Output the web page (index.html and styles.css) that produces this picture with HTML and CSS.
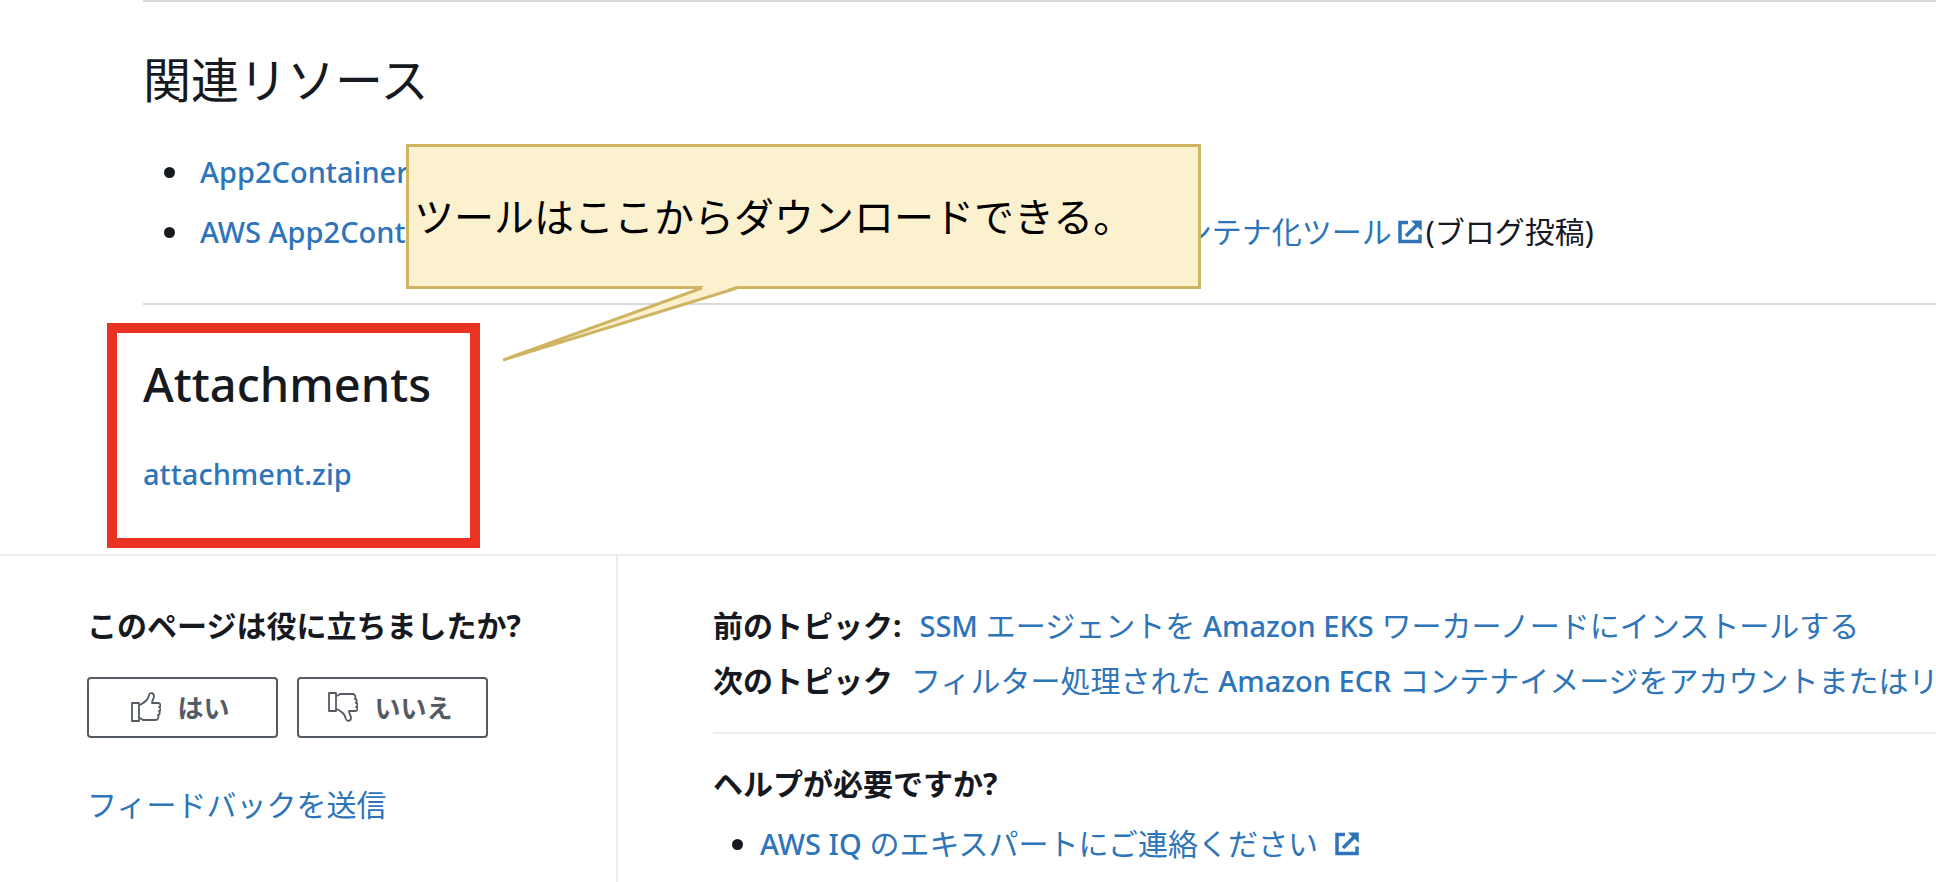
FILE: index.html
```html
<!DOCTYPE html>
<html lang="ja">
<head>
<meta charset="utf-8">
<meta name="viewport" content="width=device-width, initial-scale=1">
<title>関連リソース</title>
<link rel="stylesheet" href="styles.css">
</head>
<body>
<svg class="sprite" aria-hidden="true">
  <symbol id="external" viewBox="0 0 24 24">
    <path d="M10 2.500H2v19h20v-7" fill="none" stroke="currentColor" stroke-width="3.500"/>
    <path d="M8 16L20 4" fill="none" stroke="currentColor" stroke-width="3.500"/>
    <path d="M13 .5h10.750V11z" fill="currentColor"/>
  </symbol>
  <symbol id="thumb" viewBox="0 0 30 30">
    <path d="M1 11h7v18H1zM9 13c5-3 8-5 9-10 1-3 5-2 5 1 0 3-2 4-2 7h6c3 0 3 4 1 4 2 1 2 4 0 4 1 2 1 4-1 4 1 2 0 5-2 5H12l-3-2" fill="none" stroke="currentColor" stroke-width="1.800" stroke-linejoin="round"/>
  </symbol>
</svg>
<main class="content">
  <section class="resources">
    <h2 class="title">関連リソース</h2>
    <ul class="list resource-list">
      <li><a class="en" href="#">App2Container</a></li>
      <li><a href="#"><span class="en">AWS App2Container</span> – Java および ASP.NET アプリケーションの新しいコンテナ化ツール<svg class="ext ext-tight"><use href="#external"/></svg></a>(ブログ投稿)</li>
    </ul>
    <aside class="callout">
      <p class="callout-text">ツールはここからダウンロードできる。</p>
      <svg class="callout-tail" viewBox="0 0 240 80" aria-hidden="true">
        <path d="M202 1L0 75L234 1z" fill="#fcf1cf"/>
        <path d="M199 3L0 75L234 3" fill="none" stroke="#cfb562" stroke-width="3" stroke-linejoin="bevel"/>
      </svg>
    </aside>
  </section>
  <section class="attachments">
    <h2 class="title title-en">Attachments</h2>
    <a class="en" href="#">attachment.zip</a>
  </section>
</main>
<footer class="footer">
  <section class="feedback">
    <h3 class="subtitle">このページは役に立ちましたか?</h3>
    <div class="votes">
      <button class="vote" type="button"><svg class="thumb"><use href="#thumb"/></svg>はい</button>
      <button class="vote" type="button"><svg class="thumb thumb-down"><use href="#thumb"/></svg>いいえ</button>
    </div>
    <a href="#">フィードバックを送信</a>
  </section>
  <section class="topics">
    <p class="topic"><strong>前のトピック:</strong><a href="#"><span class="en">SSM</span> エージェントを <span class="en">Amazon EKS</span> ワーカーノードにインストールする</a></p>
    <p class="topic"><strong>次のトピック</strong><a href="#">フィルター処理された <span class="en">Amazon ECR</span> コンテナイメージをアカウントまたはリ</a></p>
    <div class="help">
      <h3 class="subtitle">ヘルプが必要ですか?</h3>
      <ul class="list help-list">
        <li><a href="#"><span class="en">AWS IQ</span> のエキスパートにご連絡ください<svg class="ext"><use href="#external"/></svg></a></li>
      </ul>
    </div>
  </section>
</footer>
</body>
</html>
```
FILE: styles.css
```css
*, *::after { box-sizing: border-box; }
body {
  margin: 0;
  background: #fff;
  color: #16191f;
  font: 30px/60px "Noto Sans", "Noto Sans CJK JP", sans-serif;
  overflow-x: hidden;
}
h2, h3, p, ul { margin: 0; padding: 0; }
a { color: #2e74b8; text-decoration: none; }
.en { font-size: 29px; font-weight: 500; }
.sprite { position: absolute; width: 0; height: 0; }

.content { padding-left: 143px; }
.resources {
  position: relative;
  z-index: 1;
  padding: 48px 0 41px;
  border-top: 2px solid #d5dbdb;
}
.title { font-size: 48px; line-height: 60px; font-weight: 400; }
.title-en { font-size: 47px; font-weight: 500; }
.list { white-space: nowrap; }
.list li { height: 60px; }
.resource-list { margin-top: 32px; padding-left: 49px; }
.resource-list li { padding-left: 8px; }
.ext { width: 24px; height: 24px; margin-left: 17px; vertical-align: -1px; }
.ext-tight { margin: 0 4px 0 6px; }

.callout {
  position: absolute;
  left: 263px;
  top: 142px;
  width: 795px;
  height: 145px;
  padding: 0 5px;
  display: flex;
  align-items: center;
  background: #fcf1cf;
  border: 3px solid #cfb562;
  color: #000;
}
.callout-text { font-size: 40px; white-space: nowrap; }
.callout-tail { position: absolute; left: 94px; top: 138px; width: 240px; height: 80px; }

.attachments {
  position: relative;
  padding: 49px 0 50px;
  border-top: 2px solid #d5dbdb;
}
.attachments .title { margin-bottom: 30px; }
.attachments .en { display: block; }
.attachments::after {
  content: "";
  position: absolute;
  left: -36px;
  top: 18px;
  width: 373px;
  height: 225px;
  border: 10px solid #eb3323;
  pointer-events: none;
}

.footer { display: flex; border-top: 2px solid #eaeded; min-height: 328px; }
.feedback { flex: 0 0 618px; padding: 40px 0 0 87px; border-right: 2px solid #eaeded; }
.subtitle { font-size: 30px; font-weight: 700; }
.votes { display: flex; gap: 19px; margin: 21px 0 37px; }
.vote {
  display: flex;
  align-items: center;
  justify-content: center;
  gap: 16px;
  width: 191px;
  height: 61px;
  padding: 0 4px 2px 0;
  border: 2px solid #545b64;
  border-radius: 4px;
  background: #fff;
  color: #545b64;
  font: 700 26px "Noto Sans", "Noto Sans CJK JP", sans-serif;
}
.thumb { width: 30px; height: 30px; }
.thumb-down { transform: scaleY(-1); }

.topics { flex: 1; min-width: 0; padding: 42px 0 0 95px; }
.topic { display: flex; gap: 18px; line-height: 55px; white-space: nowrap; overflow: hidden; }
.help { margin-top: 24px; padding-top: 20px; border-top: 2px solid #eaeded; }
.help-list { padding-left: 47px; }
```
